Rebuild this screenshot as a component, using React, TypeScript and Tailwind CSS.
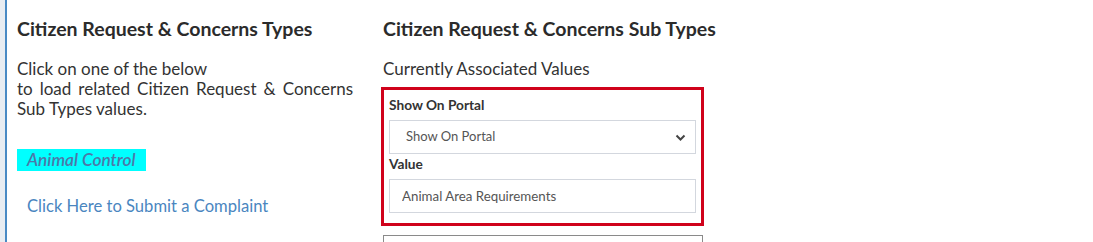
export default function App() {
  return (
    <div className="h-[242px] w-full bg-[#e9edf2] pl-[5px] overflow-hidden" style={{ fontFamily: "Lato, 'Noto Sans', sans-serif" }}>
      <div className="flex h-full bg-white border-l-2 border-[#4a8ac4] text-[#333333]">
        {/* types column */}
        <div className="w-[346px] pl-[10px] pt-[18px]">
          <h3 className="text-[19.5px] font-bold leading-[22px] text-[#2b2b2b]">Citizen Request &amp; Concerns Types</h3>
          <p className="mt-[19px] text-[17px] leading-[20px] text-justify">
            Click on one of the below
            <br />
            to load related Citizen Request &amp; Concerns Sub Types values.
          </p>
          <div className="mt-[30px] inline-block h-[22px] bg-[#00ffff] pl-[10px] pr-[10px] text-[17.3px] leading-[22px] font-semibold italic text-[#4c78a8]">
            Animal Control
          </div>
          <div className="mt-[24px] pl-[10px] text-[16.6px] leading-[20px] text-[#4a86bf]">
            <a href="#">Click Here to Submit a Complaint</a>
          </div>
        </div>

        {/* sub types column */}
        <div className="ml-[30px] w-[323px] pt-[18px]">
          <h3 className="whitespace-nowrap text-[19.5px] font-bold leading-[22px] text-[#2b2b2b]">Citizen Request &amp; Concerns Sub Types</h3>
          <div className="mt-[19px] text-[17px] leading-[20px]">Currently Associated Values</div>
          <div className="mt-[8px] -ml-[2px] w-[323px] border-[3px] border-[#d0021b] px-[5px] pt-[6px] pb-[10px]">
            <label className="block text-[13.7px] font-bold leading-[18px]">Show On Portal</label>
            <div className="relative mt-[6px]">
              <select className="block h-[34px] w-full appearance-none border border-[#d3d7de] bg-white pl-[16px] text-[13px] text-[#555555] outline-none">
                <option>Show On Portal</option>
              </select>
              <svg className="pointer-events-none absolute right-[10px] top-[13px] h-[9px] w-[11px]" viewBox="0 0 11 9" fill="none" stroke="#444" strokeWidth="2">
                <path d="M1.5 2.5 5.5 6.5 9.5 2.5" />
              </svg>
            </div>
            <label className="block text-[13.7px] font-bold leading-[20px]">Value</label>
            <input
              className="mt-[5px] block h-[34px] w-full border border-[#d3d7de] px-[12px] text-[13.3px] text-[#555555] outline-none"
              defaultValue="Animal Area Requirements"
            />
          </div>
          <div className="mt-[9px] h-[30px] w-[320px] border border-[#8a8a8a]"></div>
        </div>
      </div>
    </div>
  );
}
